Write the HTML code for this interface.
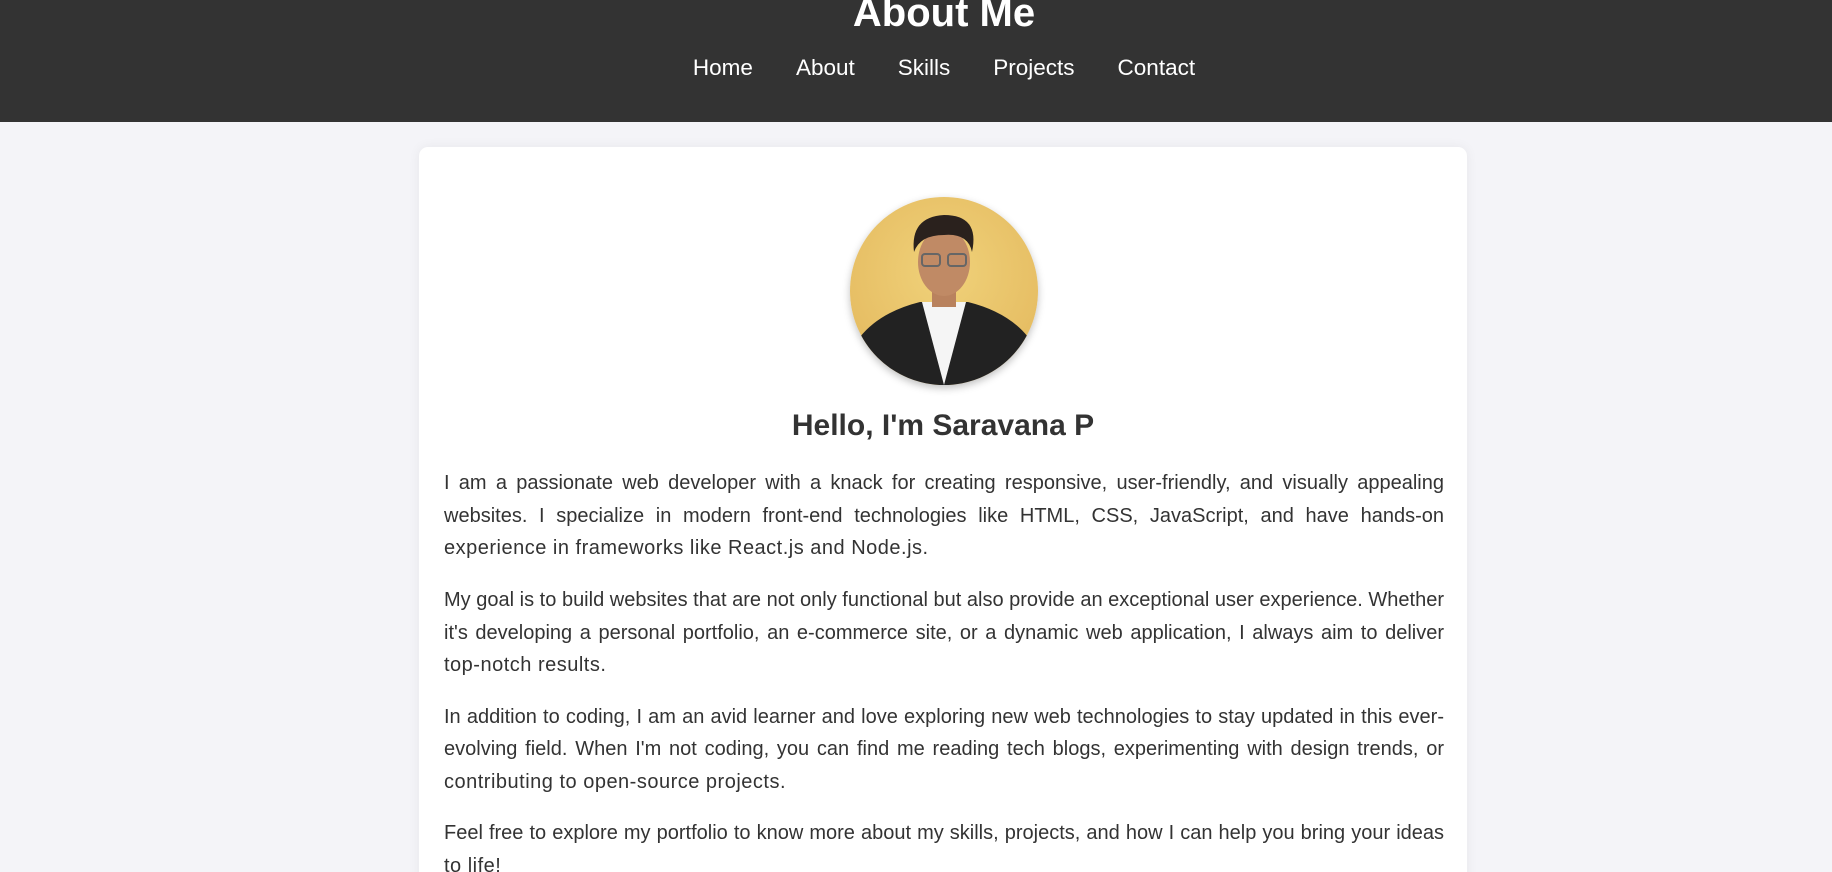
<!DOCTYPE html>
<html><head><meta charset="utf-8"><style>
html,body{margin:0;padding:0;overflow:hidden}
body{width:1832px;height:872px;background:#f4f4f8;font-family:"Liberation Sans",Arial,sans-serif;color:#333;position:relative}
header{position:absolute;left:0;top:0;width:1832px;height:122px;background:#333}
h1{position:absolute;left:744px;width:400px;top:-14px;margin:0;text-align:center;color:#fff;font-size:40px;line-height:54px;font-weight:bold}
nav{position:absolute;left:594px;width:700px;top:54px;text-align:center;font-size:22.5px;line-height:28px}
nav a{color:#fff;text-decoration:none;margin:0 21.5px}
.card{position:absolute;left:419px;top:147px;width:998px;height:800px;background:#fff;border-radius:9px;box-shadow:0 0 12px rgba(0,0,0,.06);padding:0 25px}
.av{position:absolute;left:431px;top:50px;width:188px;height:188px;border-radius:50%;overflow:hidden;box-shadow:0 3px 8px rgba(0,0,0,.25);background:radial-gradient(circle at 50% 40%,#f0d27a,#e2b55a)}
h2{position:absolute;left:0;width:1048px;top:260px;margin:0;text-align:center;font-size:30px;line-height:38px}
.txt{position:absolute;left:25px;top:320px;width:1000px}
p{margin:0 0 18.7px;font-size:20px;line-height:32.7px}
p span{display:block;text-align:justify;text-align-last:justify;white-space:nowrap;word-spacing:0}
p span.l{text-align-last:left;letter-spacing:0.5px}
</style></head><body>
<header><h1>About Me</h1>
<nav><a>Home</a><a>About</a><a>Skills</a><a>Projects</a><a>Contact</a></nav></header>
<div class="card">
<div class="av"><svg width="188" height="188" viewBox="0 0 188 188">
<path d="M0 188 L10 140 Q30 115 70 105 L118 105 Q158 115 178 140 L188 188Z" fill="#222"/>
<path d="M72 105 L94 188 L116 105Z" fill="#f5f5f5"/>
<rect x="82" y="80" width="24" height="30" fill="#b9825e"/>
<ellipse cx="94" cy="65" rx="26" ry="34" fill="#c08a65"/>
<path d="M64 55 Q60 20 94 18 Q130 18 122 55 Q118 36 94 38 Q70 38 64 55Z" fill="#2a211d"/>
<rect x="72" y="57" width="18" height="12" rx="3" fill="none" stroke="#666" stroke-width="2"/>
<rect x="98" y="57" width="18" height="12" rx="3" fill="none" stroke="#666" stroke-width="2"/>
</svg></div>
<h2>Hello, I'm Saravana P</h2>
<div class="txt">
<p><span>I am a passionate web developer with a knack for creating responsive, user-friendly, and visually appealing</span><span>websites. I specialize in modern front-end technologies like HTML, CSS, JavaScript, and have hands-on</span><span class="l">experience in frameworks like React.js and Node.js.</span></p>
<p><span>My goal is to build websites that are not only functional but also provide an exceptional user experience. Whether</span><span>it's developing a personal portfolio, an e-commerce site, or a dynamic web application, I always aim to deliver</span><span class="l">top-notch results.</span></p>
<p><span>In addition to coding, I am an avid learner and love exploring new web technologies to stay updated in this ever-</span><span>evolving field. When I'm not coding, you can find me reading tech blogs, experimenting with design trends, or</span><span class="l">contributing to open-source projects.</span></p>
<p><span>Feel free to explore my portfolio to know more about my skills, projects, and how I can help you bring your ideas</span><span class="l">to life!</span></p>
</div></div>
</body></html>
